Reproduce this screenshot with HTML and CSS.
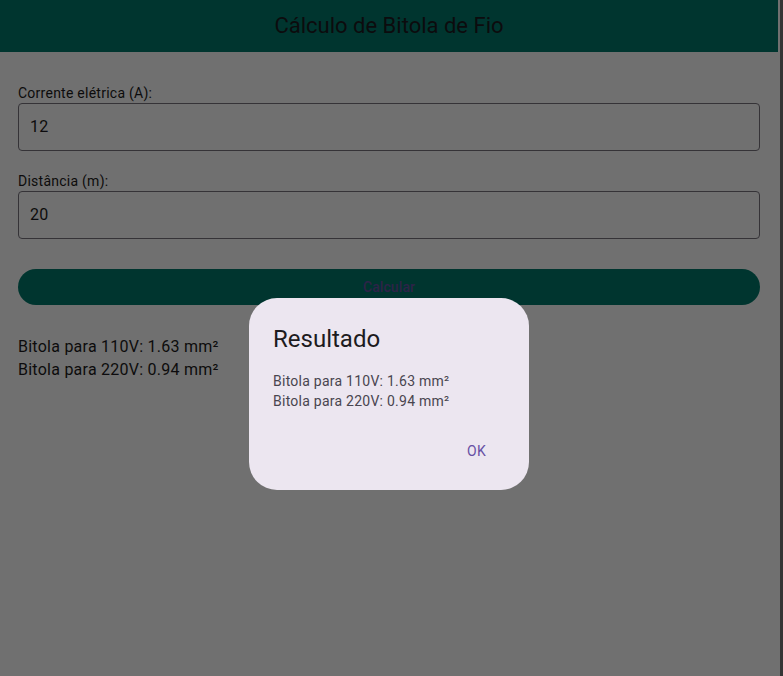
FILE: index.html
```html
<!DOCTYPE html>
<html lang="pt">
<head>
<meta charset="utf-8">
<title>Cálculo de Bitola de Fio</title>
<link rel="stylesheet" href="styles.css">
</head>
<body>
<div class="screen">
  <div class="app">
    <header class="appbar">Cálculo de Bitola de Fio</header>
    <main class="content">
      <label class="field-label">Corrente elétrica (A):</label>
      <div class="input">12</div>
      <label class="field-label second">Distância (m):</label>
      <div class="input">20</div>
      <div class="btn">Calcular</div>
      <div class="results">
        <div>Bitola para 110V: 1.63 mm²</div>
        <div>Bitola para 220V: 0.94 mm²</div>
      </div>
    </main>
  </div>
  <div class="gap"></div>
  <div class="edge"></div>
</div>
<div class="barrier"></div>
<div class="dialog">
  <div class="dialog-title">Resultado</div>
  <div class="dialog-body">
    <div>Bitola para 110V: 1.63 mm²</div>
    <div>Bitola para 220V: 0.94 mm²</div>
  </div>
  <div class="dialog-actions"><span class="ok">OK</span></div>
</div>
</body>
</html>
```
FILE: styles.css
```css
html, body {
  margin: 0;
  padding: 0;
  height: 100%;
  overflow: hidden;
  font-family: Roboto, "Noto Sans", sans-serif;
}
body {
  background: #ffffff;
}
.screen {
  display: flex;
  height: 676px;
}
.app {
  width: 778px;
  background: #ffffff;
}
.gap {
  width: 2px;
  background: #ffffff;
}
.edge {
  width: 3px;
  background: #7a7a7a;
}
.appbar {
  height: 52px;
  background: #00796b;
  color: #1d1b20;
  font-size: 22px;
  display: flex;
  align-items: center;
  justify-content: center;
  padding-bottom: 1px;
  box-sizing: border-box;
}
.content {
  padding: 31px 18px 0 18px;
  display: flex;
  flex-direction: column;
}
.field-label {
  font-size: 14px;
  line-height: 20px;
  letter-spacing: 0.25px;
  color: #1d1b20;
}
.field-label.second {
  margin-top: 20px;
}
.input {
  height: 48px;
  box-sizing: border-box;
  border: 1px solid #79747e;
  border-radius: 4px;
  padding: 0 11px 2px 11px;
  display: flex;
  align-items: center;
  font-size: 16px;
  letter-spacing: 0.25px;
  color: #1d1b20;
}
.btn {
  margin-top: 30px;
  height: 36px;
  border-radius: 18px;
  background: #00796b;
  color: #6750a4;
  font-size: 14px;
  font-weight: 500;
  letter-spacing: 0.1px;
  display: flex;
  align-items: center;
  justify-content: center;
}
.results {
  margin-top: 30px;
  font-size: 16px;
  line-height: 23px;
  letter-spacing: 0.25px;
  color: #1d1b20;
}
.barrier {
  position: fixed;
  inset: 0;
  background: rgba(0, 0, 0, 0.56);
}
.dialog {
  position: fixed;
  left: 249px;
  top: 298px;
  width: 280px;
  height: 192px;
  box-sizing: border-box;
  background: #ece6f0;
  border-radius: 28px;
  padding: 25px 24px 0 24px;
  display: flex;
  flex-direction: column;
}
.dialog-title {
  font-size: 24px;
  line-height: 32px;
  color: #1d1b20;
}
.dialog-body {
  margin-top: 16px;
  font-size: 14px;
  line-height: 20px;
  letter-spacing: 0.25px;
  color: #49454f;
}
.dialog-actions {
  margin-top: 30px;
  display: flex;
  justify-content: flex-end;
  padding-right: 19px;
}
.ok {
  font-size: 14px;
  font-weight: 400;
  line-height: 20px;
  letter-spacing: 0.3px;
  color: #6750a4;
}
```
